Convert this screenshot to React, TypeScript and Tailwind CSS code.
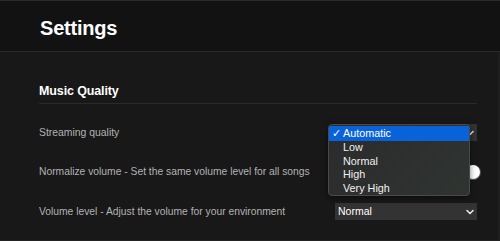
import React from "react";

const font = { fontFamily: '"Liberation Sans", Arial, sans-serif' };

function Chevron({ className = "" }: { className?: string }) {
  return (
    <svg width="8" height="6" viewBox="0 0 8 6" className={className}>
      <path d="M1 1.5 L4 4.5 L7 1.5" fill="none" stroke="#e5e5e5" strokeWidth="1.6" strokeLinecap="round" strokeLinejoin="round" />
    </svg>
  );
}

export default function App() {
  const options = ["Automatic", "Low", "Normal", "High", "Very High"];
  return (
    <div className="w-[500px] h-[241px] overflow-hidden bg-[#181818] flex flex-col border-t border-[#2a2a2a] border-b border-b-[#232323] relative" style={font}>
      <div className="h-[51px] bg-[#121212] border-b border-[#2a2a2a] flex items-center pl-[40px] shrink-0">
        <h1 className="text-[20px] font-bold text-white tracking-[-0.01em] mt-[4px]">Settings</h1>
      </div>
      <div className="flex-1 pl-[39px] pr-[21px] pt-[32px] border-r-2 border-[#1e1e1e]">
        <div className="border-b border-[#2a2a2a] pb-[5px]">
          <h2 className="text-[12.5px] font-bold text-white leading-[14px] tracking-[-0.01em]">Music Quality</h2>
        </div>
        <div className="flex flex-col mt-[20px]">
          <div className="h-[17px] flex items-center justify-between">
            <span className="text-[10.4px] text-[#b3b3b3]">Streaming quality</span>
            <div className="w-[142px] h-[17px] bg-[#333333] flex items-center justify-end pr-[3px]">
              <Chevron />
            </div>
          </div>
          <div className="h-[17px] mt-[22.5px] flex items-center justify-between">
            <span className="text-[10.3px] text-[#b3b3b3]">Normalize volume - Set the same volume level for all songs</span>
            <div className="w-[30px] h-[15px] rounded-full bg-[#535353] flex items-center justify-end pr-[1px] -mr-[4px]">
              <div className="w-[14px] h-[14px] rounded-full bg-white" />
            </div>
          </div>
          <div className="h-[17px] mt-[22.5px] flex items-center justify-between">
            <span className="text-[10.3px] text-[#b3b3b3]">Volume level - Adjust the volume for your environment</span>
            <div className="w-[142px] h-[17px] bg-[#333333] flex items-center justify-between pl-[3px] pr-[3px]">
              <span className="text-[10.5px] text-white">Normal</span>
              <Chevron />
            </div>
          </div>
        </div>
      </div>
      <div className="absolute left-[328px] top-[123px] w-[142px] h-[72px] rounded-[4px] border border-[#4a4a4a] bg-[linear-gradient(135deg,#2b2b2b,#2f3431)] pt-[0.5px] shadow-[0_2px_6px_rgba(0,0,0,0.5)] overflow-hidden">
        {options.map((o, i) => (
          <div
            key={o}
            className={
              i === 0
                ? "h-[15px] bg-[#0a62d9] flex items-center text-[10.8px] text-white"
                : "h-[13.5px] flex items-center text-[10.8px] text-[#f0f0f0]"
            }
          >
            <span className="w-[14px] pl-[3px] text-[11px] leading-none">{i === 0 ? "✓" : ""}</span>
            <span>{o}</span>
          </div>
        ))}
      </div>
    </div>
  );
}
